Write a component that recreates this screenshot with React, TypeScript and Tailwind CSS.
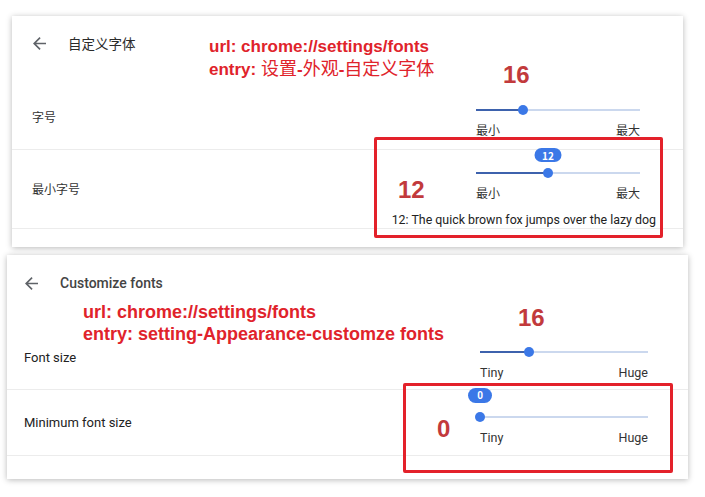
import type { ReactNode } from "react";

const ArrowBack = () => (
  <svg width="13" height="13" viewBox="4 4 16 16" fill="#5f6368">
    <path d="M20 11H7.83l5.59-5.59L12 4l-8 8 8 8 1.41-1.41L7.83 13H20v-2z" />
  </svg>
);

type SliderProps = {
  className: string;
  pct: number;
  lo: string;
  hi: string;
  bubble?: string;
  bubbleClass?: string;
  labelsClass: string;
};

const Slider = ({ className, pct, lo, hi, bubble, bubbleClass, labelsClass }: SliderProps) => (
  <div className={className}>
    <div className="relative h-[10px]">
      <div className="absolute left-0 right-0 top-[4px] h-[2px] bg-[#cbd8ee]" />
      <div className="absolute left-0 top-[4px] h-[2px] bg-[#3d62ad]" style={{ width: `${pct}%` }} />
      <div
        className="absolute top-0 -ml-[5px] size-[10px] rounded-full bg-[#3b78e7]"
        style={{ left: `${pct}%` }}
      />
      {bubble && (
        <div
          className={`absolute -translate-x-1/2 flex items-center justify-center rounded-full bg-[#3b78e7] text-white font-bold text-[10px] ${bubbleClass}`}
          style={{ left: `${pct}%` }}
        >
          {bubble}
        </div>
      )}
    </div>
    <div className={`flex justify-between text-[#333] ${labelsClass}`}>
      <span>{lo}</span>
      <span>{hi}</span>
    </div>
  </div>
);

const RedBox = ({ className, children }: { className: string; children?: ReactNode }) => (
  <div className={`absolute border-[3px] border-[#e3212a] rounded-[2px] ${className}`}>{children}</div>
);

const annot = "font-['Liberation_Sans',Arial,sans-serif] font-bold text-[#e0232b]";
const cjk = "font-normal font-['Noto_Sans_CJK_SC',sans-serif] text-[18px]";
const bigNum = "absolute font-['Liberation_Sans',Arial,sans-serif] font-bold text-[24px] leading-[28px] text-[#c23a3c]";

export default function App() {
  return (
    <div className="w-[705px] h-[497px] bg-white overflow-hidden pt-[16px]">
      {/* Chinese card */}
      <div className="relative ml-[12px] w-[671px] h-[231px] bg-white shadow-[0_1px_6px_rgba(0,0,0,0.28)] font-['Noto_Sans_CJK_SC','Noto_Sans',sans-serif]">
        <div className="h-[64px] flex items-start pt-[18px] pl-[21px] gap-[22px]">
          <div className="h-[18px] flex items-center">
            <ArrowBack />
          </div>
          <span className="text-[13.5px] leading-[18px] text-[#2b2b2b]">自定义字体</span>
        </div>
        <div className="h-[70px] flex justify-between border-b border-[#ececec]">
          <span className="pl-[20px] self-center mt-[4px] text-[12px] leading-[16px] text-[#333]">字号</span>
          <div className="pr-[43px] pt-[25px]">
            <Slider className="w-[164px]" pct={28.7} lo="最小" hi="最大" labelsClass="mt-[7px] text-[12px] leading-[16px]" />
          </div>
        </div>
        <div className="h-[79px] flex justify-between border-b border-[#ececec]">
          <span className="pl-[20px] self-center text-[12px] leading-[16px] text-[#333]">最小字号</span>
          <div className="pr-[43px] pt-[18px] flex flex-col items-end">
            <Slider
              className="w-[164px]"
              pct={43.9}
              lo="最小"
              hi="最大"
              bubble="12"
              bubbleClass="top-[-20px] w-[27px] h-[14px]"
              labelsClass="mt-[7px] text-[12px] leading-[16px]"
            />
            <span className="-mr-[16px] mt-[11px] font-['Roboto',sans-serif] text-[12.4px] leading-[16px] text-[#222] whitespace-nowrap">
              12: The quick brown fox jumps over the lazy dog
            </span>
          </div>
        </div>

        <div className={`absolute left-[197px] top-[20px] text-[17px] leading-[21px] ${annot}`}>url: chrome://settings/fonts</div>
        <div className={`absolute left-[197px] top-[40px] text-[17px] leading-[22px] ${annot}`}>
          entry: <span className={cjk}>设置</span>-<span className={cjk}>外观</span>-<span className={cjk}>自定义字体</span>
        </div>
        <div className={`${bigNum} left-[491px] top-[45px]`}>16</div>
        <RedBox className="left-[362px] top-[121px] w-[289px] h-[101px]" />
        <div className={`${bigNum} left-[386px] top-[160px]`}>12</div>
      </div>

      {/* English card */}
      <div className="relative ml-[7px] mt-[8px] w-[681px] h-[224px] bg-white shadow-[0_1px_6px_rgba(0,0,0,0.28)] font-['Roboto',sans-serif]">
        <div className="h-[69px] flex items-start pt-[19px] pl-[18px] gap-[22px]">
          <div className="h-[18px] flex items-center">
            <ArrowBack />
          </div>
          <span className="text-[14px] leading-[18px] font-medium text-[#444]">Customize fonts</span>
        </div>
        <div className="h-[66px] flex justify-between border-b border-[#ececec]">
          <span className="pl-[17px] self-center mt-[2px] text-[13px] leading-[16px] text-[#222]">Font size</span>
          <div className="pr-[40px] pt-[23px]">
            <Slider className="w-[168px]" pct={29.2} lo="Tiny" hi="Huge" labelsClass="mt-[8px] text-[12.5px] leading-[16px]" />
          </div>
        </div>
        <div className="h-[66px] flex justify-between border-b border-[#ececec]">
          <span className="pl-[17px] self-center text-[13px] leading-[16px] text-[#222]">Minimum font size</span>
          <div className="pr-[40px] pt-[22px]">
            <Slider
              className="w-[168px]"
              pct={0}
              lo="Tiny"
              hi="Huge"
              bubble="0"
              bubbleClass="top-[-24px] w-[24px] h-[15px]"
              labelsClass="mt-[8px] text-[12.5px] leading-[16px]"
            />
          </div>
        </div>

        <div className={`absolute left-[76px] top-[46px] text-[18px] leading-[22px] ${annot}`}>url: chrome://settings/fonts</div>
        <div className={`absolute left-[76px] top-[68px] text-[18px] leading-[22px] ${annot}`}>entry: setting-Appearance-customze fonts</div>
        <div className={`${bigNum} left-[511px] top-[49px]`}>16</div>
        <RedBox className="left-[396px] top-[128px] w-[270px] h-[90px]" />
        <div className={`${bigNum} left-[430px] top-[160px]`}>0</div>
      </div>
    </div>
  );
}
